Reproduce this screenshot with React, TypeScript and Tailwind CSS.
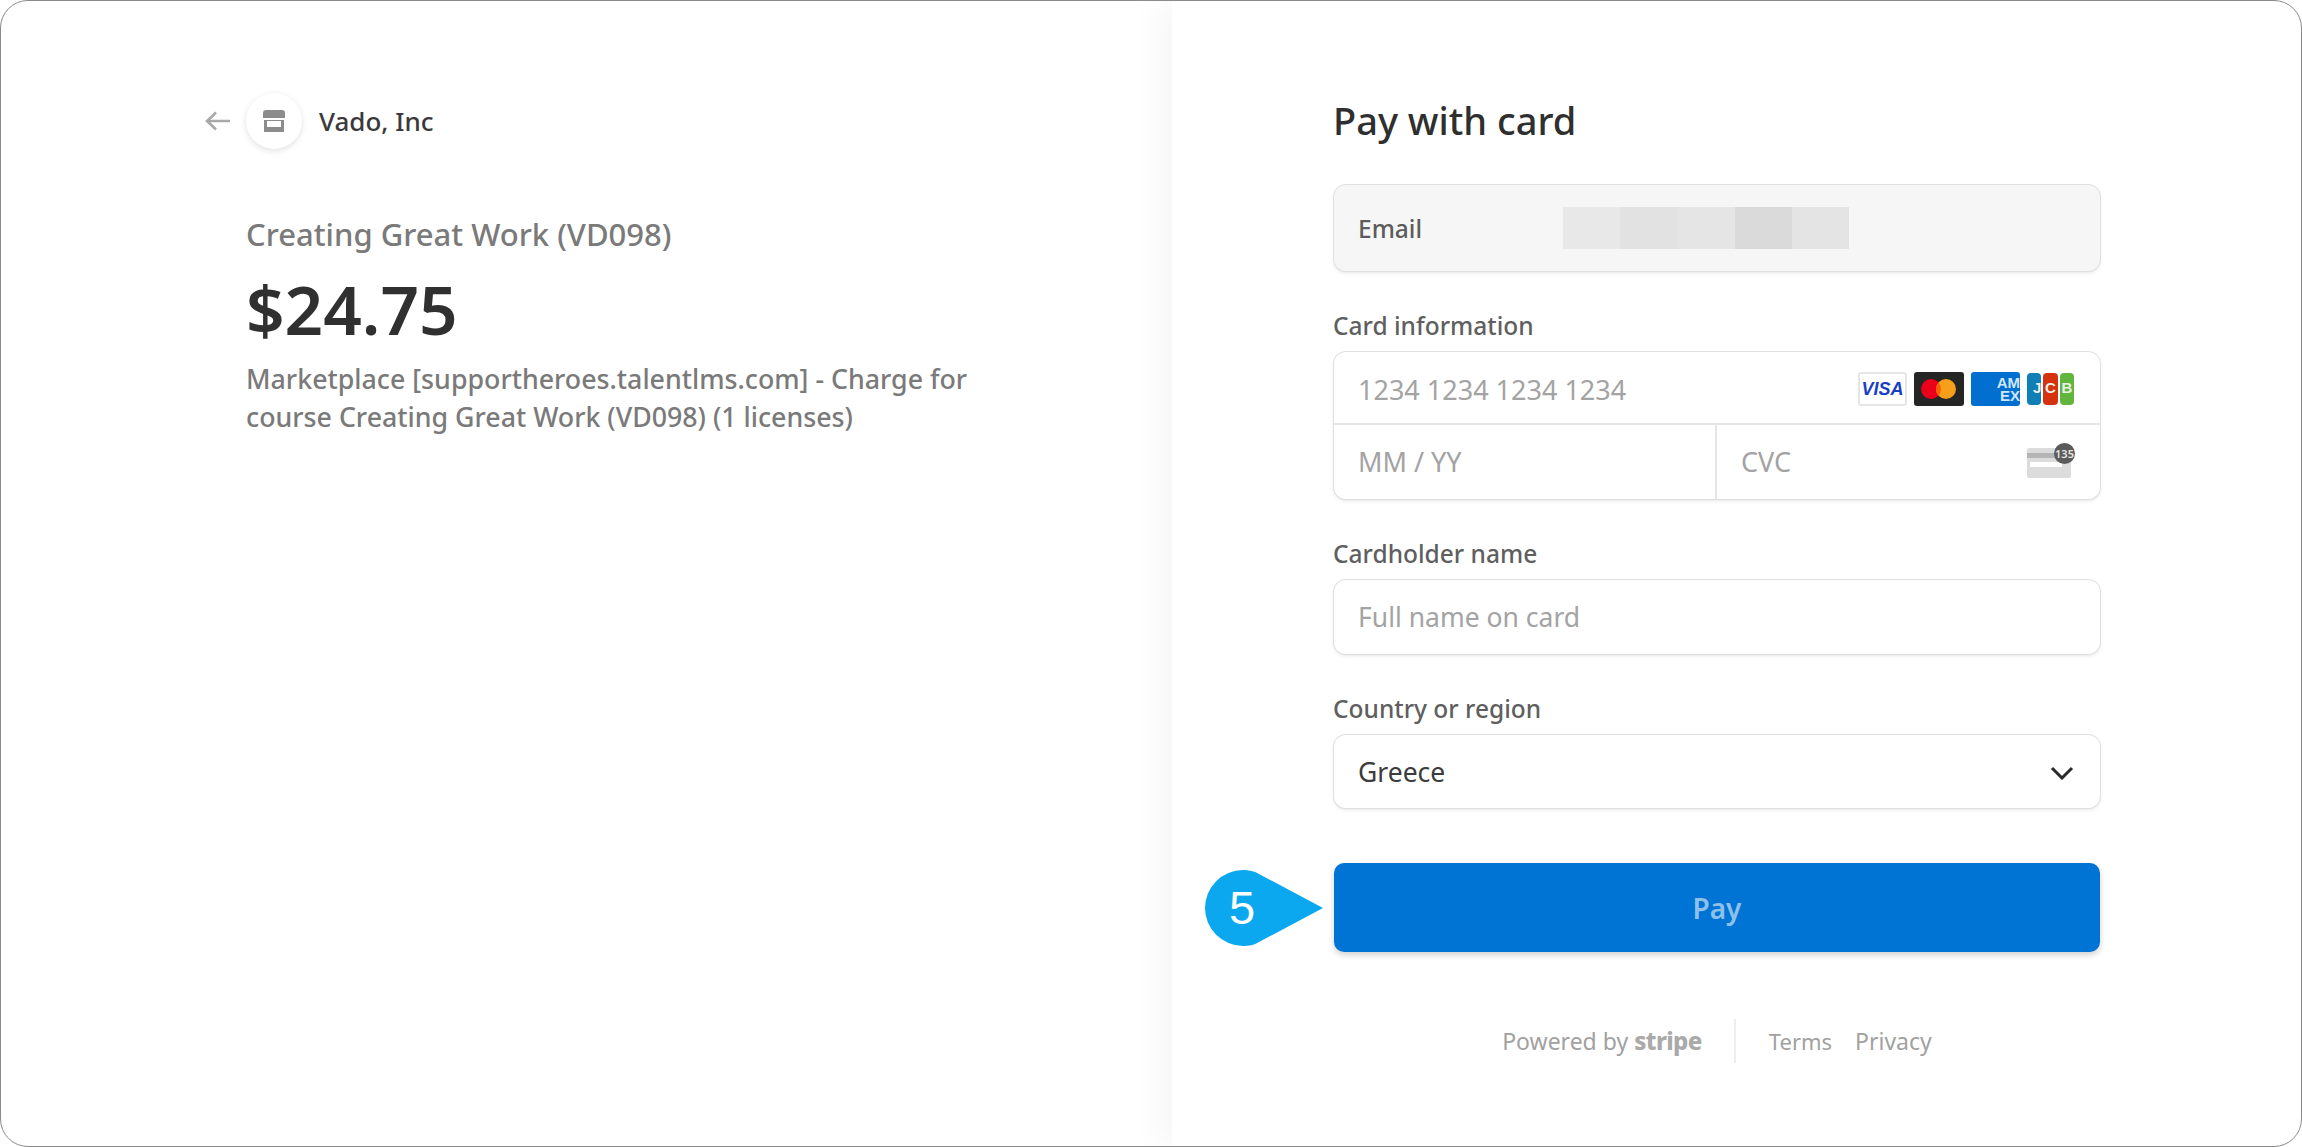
const font = "font-['Noto_Sans','Open_Sans',sans-serif]";

const VisaLogo = () => (
    <div className="w-[49px] h-[34px] rounded-[3px] border-2 border-[#e6e6e6] bg-white flex items-center justify-center">
        <span className="font-['Liberation_Sans',sans-serif] font-bold italic text-[18px] leading-none text-[#1a3fc4]">VISA</span>
    </div>
);

const MastercardLogo = () => (
    <svg width="50" height="34" viewBox="0 0 50 34">
        <rect width="50" height="34" rx="3" fill="#252525" />
        <circle cx="17" cy="17" r="10" fill="#eb001b" />
        <circle cx="32" cy="17" r="10" fill="#f79e1b" />
        <path d="M24.500 10.400a10 10 0 0 1 0 13.200a10 10 0 0 1 0-13.200z" fill="#ff5f00" />
    </svg>
);

const AmexLogo = () => (
    <div className="w-[49px] h-[34px] rounded-[3px] bg-[#016fd0] flex flex-col items-end justify-center overflow-hidden">
        <span className="font-['Liberation_Sans',sans-serif] font-bold text-[15px] leading-[13px] text-[#cfe6fb]">AM</span>
        <span className="font-['Liberation_Sans',sans-serif] font-bold text-[15px] leading-[13px] text-[#cfe6fb]">EX</span>
    </div>
);

const JcbLogo = () => (
    <div className="flex gap-[2px] h-[32px] w-[47px] font-['Liberation_Sans',sans-serif] font-bold text-[15px] text-[#e8f0e8]">
        <span className="flex-1 rounded-[4px] bg-[#0f7fb5] flex items-center justify-end">J</span>
        <span className="flex-1 rounded-[4px] bg-[#d5330f] flex items-center justify-center">C</span>
        <span className="flex-1 rounded-[4px] bg-[#62b53c] flex items-center justify-center">B</span>
    </div>
);

const CvcIcon = () => (
    <div className="relative w-[46px] h-[32px] mr-px">
        <div className="absolute left-0 bottom-0 w-[44px] h-[30px] rounded-[2px] bg-[#dcdcdc]">
            <div className="mt-[5px] h-[5px] bg-[#b5b5b5]" />
            <div className="mt-[4px] h-[5px] w-[32px] ml-[3px] bg-white" />
        </div>
        <div className="absolute -right-[2px] -top-[3px] w-[21px] h-[21px] rounded-full bg-[#5b5b5b] flex items-center justify-center text-[11px] leading-none font-semibold text-[#e6e6e6]">135</div>
    </div>
);

const boxShadow = "shadow-[0_0_0_1px_#e0e0e0,0_2px_4px_rgba(0,0,0,0.09),0_1px_2px_rgba(0,0,0,0.06)]";

const Field = ({label, children}: {label: string; children: React.ReactNode}) => (
    <div className="flex flex-col">
        <label className="-ml-px text-[24.5px] leading-[30px] font-medium text-[#5f5f5f] mb-[11px]">{label}</label>
        {children}
    </div>
);

export default function App() {
    return (
        <div className={`w-[2302px] h-[1147px] bg-white ${font}`}>
            <div className="w-full h-full border border-[#8a8a8a] rounded-[28px] overflow-hidden flex">
                <section className="w-[1171px] pl-[204px] pt-[92px]">
                    <div className="flex items-center">
                        <svg width="26" height="20" viewBox="0 0 26 20" fill="none" stroke="#a9a9a9" strokeWidth="2.6">
                            <path d="M25 10H2M11 1.5L2 10l9 8.500" />
                        </svg>
                        <div className="ml-[15px] w-[56px] h-[56px] rounded-full bg-white shadow-[0_2px_6px_rgba(0,0,0,0.12)] flex items-center justify-center">
                            <svg width="24" height="24" viewBox="0 0 24 24" fill="#8c8c8c">
                                <path d="M4 1h16a3 3 0 0 1 3 3v5H1V4a3 3 0 0 1 3-3z" />
                                <path d="M2 11h20v12H2zM5 12v6h14v-6z" fillRule="evenodd" />
                            </svg>
                        </div>
                        <span className="ml-[17px] text-[26px] leading-[34px] font-medium text-[#3a3a3a]">Vado, Inc</span>
                    </div>
                    <div className="pl-[41px] mt-[66px] w-[780px]">
                        <h2 className="text-[31px] leading-[38px] font-medium text-[#7a7a7a]">Creating Great Work (VD098)</h2>
                        <div className="mt-[16px] text-[67.5px] leading-[80px] font-semibold text-[#303030]">$24.75</div>
                        <p className="mt-[11px] w-[740px] text-[26.75px] leading-[38px] font-medium text-[#7a7a7a]">
                            Marketplace [supportheroes.talentlms.com] - Charge for course Creating Great Work (VD098) (1 licenses)
                        </p>
                    </div>
                </section>

                <section className="flex-1 pl-[162px] pr-[201px] pt-[94px] shadow-[-14px_0_30px_rgba(0,0,0,0.035)]">
                    <h1 className="-ml-px text-[38px] leading-[50px] font-medium text-[#2f2f2f]">Pay with card</h1>

                    <div className={`mt-[40px] h-[86px] rounded-[12px] bg-[#f6f6f6] ${boxShadow} flex items-center pl-[24px]`}>
                        <span className="w-[205px] pt-[3px] text-[24.5px] font-medium text-[#5c5c5c]">Email</span>
                        <div className="flex h-[42px] w-[286px]">
                            <div className="w-[57px] bg-[#e8e8e8]" />
                            <div className="w-[58px] bg-[#e2e2e2]" />
                            <div className="w-[57px] bg-[#e5e5e5]" />
                            <div className="w-[57px] bg-[#dadada]" />
                            <div className="w-[57px] bg-[#e4e4e4]" />
                        </div>
                    </div>

                    <div className="mt-[40px] flex flex-col gap-[40px]">
                        <Field label="Card information">
                            <div className={`rounded-[12px] bg-white ${boxShadow}`}>
                                <div className="h-[73px] flex items-center pl-[24px] pr-[26px] pt-[2px] border-b-2 border-[#e6e6e6]">
                                    <span className="flex-1 pt-[3px] text-[27px] text-[#a3a3a3]">1234 1234 1234 1234</span>
                                    <div className="flex items-center gap-[7px]">
                                        <VisaLogo />
                                        <MastercardLogo />
                                        <AmexLogo />
                                        <JcbLogo />
                                    </div>
                                </div>
                                <div className="h-[74px] flex">
                                    <div className="w-[383px] flex items-center pl-[24px] border-r-2 border-[#e6e6e6] text-[27px] text-[#a3a3a3]">MM / YY</div>
                                    <div className="flex-1 flex items-center justify-between pl-[24px] pr-[26px] text-[27px] text-[#a3a3a3]">
                                        <span>CVC</span>
                                        <CvcIcon />
                                    </div>
                                </div>
                            </div>
                        </Field>

                        <Field label="Cardholder name">
                            <div className={`h-[74px] rounded-[12px] bg-white ${boxShadow} flex items-center pl-[24px] pt-[2px] text-[26.5px] text-[#a3a3a3]`}>Full name on card</div>
                        </Field>

                        <Field label="Country or region">
                            <div className={`h-[73px] rounded-[12px] bg-white ${boxShadow} flex items-center justify-between pl-[24px] pr-[26px] pt-[2px] text-[26.5px] text-[#3c3c3c]`}>
                                <span>Greece</span>
                                <svg width="24" height="14" viewBox="0 0 24 14" fill="none" stroke="#2a2a2a" strokeWidth="3">
                                    <path d="M2 2l10 10L22 2" />
                                </svg>
                            </div>
                        </Field>
                    </div>

                    <div className="relative mt-[55px]">
                        <button className="w-full h-[89px] rounded-[10px] bg-[#0074d4] shadow-[0_3px_6px_rgba(0,0,0,0.18)] text-[28px] font-semibold text-[#8fc0ea]">Pay</button>
                        <svg className="absolute -left-[130px] top-[6px]" width="120" height="78" viewBox="0 0 120 78">
                            <path d="M39 1c6 0 11 1 16 4l64 34l-64 34c-5 3-10 4-16 4a38 38 0 0 1 0-76z" fill="#0ba7ef" />
                            <text x="38" y="55" textAnchor="middle" fontSize="47" fill="#ffffff" fontFamily="Liberation Sans, sans-serif">5</text>
                        </svg>
                    </div>

                    <footer className="mt-[67px] flex items-center justify-center text-[23px] text-[#a1a1a1]">
                        <span>Powered by</span>
                        <span className="ml-[6px] text-[24px] leading-none font-extrabold tracking-tight text-[#aaaaaa]">stripe</span>
                        <div className="ml-[32px] mr-[33px] w-[2px] h-[44px] bg-[#eeeeee]" />
                        <span className="text-[22px]">Terms</span>
                        <span className="ml-[23px]">Privacy</span>
                    </footer>
                </section>
            </div>
        </div>
    );
}
